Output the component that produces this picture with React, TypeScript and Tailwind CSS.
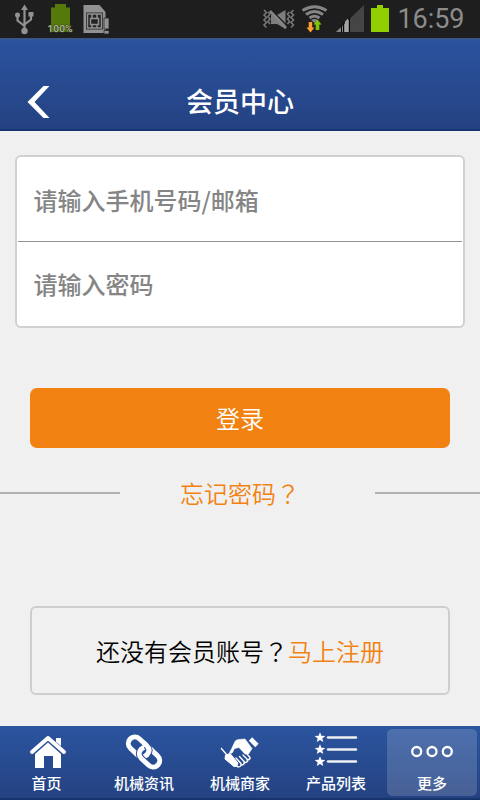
import type { ReactNode } from "react";

const star = "M0 -6 L1.6 -1.9 L6 -1.7 L2.6 1 L3.8 5.2 L0 2.8 L-3.8 5.2 L-2.6 1 L-6 -1.7 L-1.6 -1.9Z";

function LeftStatus() {
  return (
    <svg width="130" height="38" viewBox="0 0 130 38" className="block">
      <g stroke="#929292" strokeWidth="2.200" fill="none">
        <path d="M24.500 9v22M17.500 16v4.500l7 5.500M31 15v4.500l-6.500 5" />
      </g>
      <g fill="#929292">
        <path d="M24.500 4.500l3.500 5.500h-7z" />
        <circle cx="17.500" cy="15" r="2.500" />
        <rect x="28.500" y="12" width="5" height="4.500" />
        <circle cx="24.500" cy="31" r="3.200" />
      </g>
      <path d="M55 4h11v3.500h4V32H51V7.500h4z" fill="#55790b" />
      <text x="47.500" y="32" fontSize="9.500" fontWeight="500" fill="#b0b5a5" stroke="#34480c" strokeWidth="1" paintOrder="stroke" fontFamily="Roboto, sans-serif" textLength="25" lengthAdjust="spacingAndGlyphs">100%</text>
      <path d="M83.500 5h16l6 7v21h-22z" fill="#929292" />
      <rect x="86" y="12.500" width="17" height="17" fill="#242424" />
      <g fill="none" stroke="#929292" strokeWidth="1.500">
        <rect x="87.500" y="14" width="14" height="14" />
        <rect x="90.500" y="18.500" width="8" height="6" />
        <path d="M92 14v4M97 14v4M92 25v3M97 25v3" />
      </g>
      <path d="M104 18h5v11h-5zM104 30.500h5V34h-5z" fill="#929292" stroke="#1e1e1e" strokeWidth=".7" />
    </svg>
  );
}

function RightStatus() {
  return (
    <svg width="230" height="38" viewBox="250 0 230 38" className="block">
      <g fill="none" stroke="#777" strokeWidth="1.600">
        <path d="M264 10l2.500 2.500-2.500 2.500 2.500 2.500-2.500 2.500 2.500 2.500-2.500 2.500 2.500 2.500M268 12l2 2-2 2.500 2 2.500-2 2.500 2 2.500M293.500 10l-2.500 2.500 2.500 2.500-2.500 2.500 2.500 2.500-2.500 2.500 2.500 2.500-2.500 2.500M289.500 12l-2 2 2 2.500-2 2.500 2 2.500-2 2.500" />
      </g>
      <path d="M271 15h6l8.500-5v19l-8.500-5h-6z" fill="#7d7d7d" />
      <path d="M271 9.500l17 17.500" stroke="#1e1e1e" strokeWidth="1.500" />
      <path d="M270 11l16 17" stroke="#858585" strokeWidth="2.600" />
      <g fill="none" stroke="#858585" strokeWidth="3">
        <path d="M302.500 10.500q12-7.500 24 0M306 14.500q8.500-6 17 0M309.500 18q5-3.500 10 0" />
      </g>
      <path d="M311 20q3.500-2.200 7 0l-3.500 3z" fill="#858585" />
      <path d="M308.700 22h3.500v5.500h2.300l-4 5-4-5h2.200z" fill="#ff9d30" />
      <path d="M317.500 19.500l4 5h-2.200V30h-3.600v-5.500h-2.200z" fill="#81c407" />
      <path d="M336 32L364 5v27z" fill="#454545" />
      <path d="M336 32L349 19.500V32z" fill="#858585" />
      <path d="M341.500 25v7M343.500 23v9M349.500 18v14" stroke="#080808" strokeWidth="1" />
      <path d="M345 21.500V32h3V18.500z" fill="#a5a5a5" />
      <path d="M377 5h6v3h6v24h-18V8h6z" fill="#91cf00" />
      <text x="397.500" y="28" fontSize="27" fill="#8c8c8c" fontFamily="Roboto, sans-serif" textLength="67">16:59</text>
    </svg>
  );
}

function HomeIcon() {
  return (
    <svg width="44" height="38" viewBox="26 732 44 38" fill="#fff">
      <path d="M32 752L48 738L64 752" fill="none" stroke="#fff" strokeWidth="4" strokeLinecap="round" strokeLinejoin="round" />
      <path d="M56 738h5v8l-5-4zM35 754l13-11.500L61 754v14h-8v-12h-9v12h-9z" />
    </svg>
  );
}

function LinkIcon() {
  return (
    <svg width="44" height="38" viewBox="122 732 44 38" fill="none">
      <g transform="rotate(43 144 752)" stroke="#fff" strokeWidth="5">
        <rect x="125" y="745.500" width="23" height="13" rx="6.500" />
        <rect x="140" y="745.500" width="23" height="13" rx="6.500" stroke="#294f99" strokeWidth="7" />
        <rect x="140" y="745.500" width="23" height="13" rx="6.500" />
        <path d="M141 745.500q7 0 7 6.500" stroke="#294f99" strokeWidth="7" />
        <path d="M137 745.500h4.500q6.500 0 6.500 6.500v1" />
      </g>
    </svg>
  );
}

function HandshakeIcon() {
  return (
    <svg width="44" height="38" viewBox="218 732 44 38">
      <path d="M231.500 749l3.500-7.500q1-2 4-2l6-.5 7 9.500-3.500 5.500-3.500 0-6-6.500-4.500 1-2 4q-2 2-3 0z" fill="#fff" stroke="#fff" strokeWidth=".6" />
      <path d="M250.500 739l6.500 6.500" stroke="#fff" strokeWidth="4.600" />
      <path d="M221 748l5.500 6.500" stroke="#fff" strokeWidth="1.300" />
      <path d="M225.500 755l4.500-1.500 8 9.500-1.500 3.500-2.500 0-9-7.500z" fill="#fff" stroke="#fff" strokeWidth="1" strokeLinejoin="round" />
      <g fill="none" stroke="#fff" strokeWidth="1.400" strokeLinecap="round" strokeLinejoin="round">
        <path d="M236 758l5 5.500q.5 3.500-3 3.500l-1-1M239.500 756.500l5 5.500q0 3-3.500 3M243 755l5 5q-.5 3-4 2.500M247 754l3 3.500q0 2.500-3 2.500" />
      </g>
    </svg>
  );
}

function ListIcon() {
  return (
    <svg width="46" height="38" viewBox="313 732 46 38" fill="#fff">
      {[737.5, 749.5, 761.5].map((y) => (
        <g key={y}>
          <path d={star} transform={`translate(320 ${y}) scale(.88)`} />
          <path d={`M328 ${y}h28`} stroke="#eef0f4" strokeWidth="2.400" strokeLinecap="round" />
        </g>
      ))}
    </svg>
  );
}

function MoreIcon() {
  return (
    <svg width="46" height="38" viewBox="409 732 46 38" fill="none" stroke="#fff" strokeWidth="2.300">
      <circle cx="416.700" cy="751.500" r="4.500" />
      <circle cx="432" cy="751.500" r="4.500" />
      <circle cx="447.300" cy="751.500" r="4.500" />
    </svg>
  );
}

function Tab({ label, icon, active = false, labelClass = "" }: { label: string; icon: ReactNode; active?: boolean; labelClass?: string }) {
  return (
    <button className="flex h-full min-w-0 p-[3px] text-white">
      <span className={`flex h-[67px] w-full flex-col items-center rounded-[5px] pt-[3px] ${active ? "bg-white/16" : ""}`}>
        {icon}
        <span className={`mt-[3px] text-[15px] leading-[20px] font-medium whitespace-nowrap ${labelClass}`}>{label}</span>
      </span>
    </button>
  );
}

export default function App() {
  return (
    <div className="flex h-[800px] w-[480px] flex-col overflow-hidden bg-[#f0f0f0] font-['Noto_Sans_CJK_SC',sans-serif]">
      <div className="flex h-[38px] shrink-0 justify-between bg-[#1e1e1e]">
        <LeftStatus />
        <RightStatus />
      </div>
      <header className="grid h-[93px] shrink-0 grid-cols-[80px_1fr_80px] border-t-2 border-b-2 border-t-[#38558d] border-b-[#17346f] bg-linear-to-b from-[#2b539e] to-[#244282] pt-[34px] text-white">
        <button aria-label="返回" className="pl-[27px]">
          <svg width="24" height="34" viewBox="27 85 24 34">
            <path d="M43.500 86H49.500L34.500 102L49.500 118H43.500L27.500 102Z" fill="#fff" />
          </svg>
        </button>
        <h1 className="text-center text-[27px] leading-[54px] font-medium">会员中心</h1>
      </header>
      <main className="flex min-h-0 flex-1 flex-col">
        <form className="mx-[15px] mt-6 flex h-[173px] shrink-0 flex-col rounded-[6px] border-2 border-[#d0d0d0] bg-white px-px text-[24px] text-[#808080]">
          <input aria-label="账号" placeholder="请输入手机号码/邮箱" className="h-[85px] w-full border-b border-[#929292] px-[15.5px] font-medium outline-none placeholder:text-[#858585] placeholder:opacity-100" />
          <input aria-label="密码" type="password" placeholder="请输入密码" className="h-[84px] w-full px-[15.5px] pb-px font-medium outline-none placeholder:text-[#858585] placeholder:opacity-100" />
        </form>
        <button className="mx-[30px] mt-[60px] h-[60px] shrink-0 rounded-[7px] bg-[#f18211] text-[24px] font-[350] text-white">登录</button>
        <div className="mt-[26px] flex h-[38px] items-center">
          <span className="h-[2px] w-[120px] bg-[#b1b1b1]" />
          <a className="flex-1 pl-[60px] text-[24px] font-[350] text-[#f18211]">忘记密码<span className="font-['Noto_Sans_CJK_TC',sans-serif]">？</span></a>
          <span className="h-[2px] w-[105px] bg-[#b1b1b1]" />
        </div>
        <div className="mx-[30px] mt-[94px] flex h-[89px] items-center justify-center rounded-[6px] border-2 border-[#cecece] text-[24px] font-[350] whitespace-nowrap text-black">
          <span>还没有会员账号<span className="font-['Noto_Sans_CJK_TC',sans-serif]">？</span></span>
          <a className="text-[#f18211]">马上注册</a>
        </div>
      </main>
      <nav className="grid h-[74px] shrink-0 grid-cols-5 border-b-2 border-[#17346f] bg-linear-to-b from-[#2b559f] to-[#244282]">
        <Tab label="首页" icon={<HomeIcon />} labelClass="pr-[3px]" />
        <Tab label="机械资讯" icon={<LinkIcon />} />
        <Tab label="机械商家" icon={<HandshakeIcon />} />
        <Tab label="产品列表" icon={<ListIcon />} />
        <Tab label="更多" icon={<MoreIcon />} active />
      </nav>
    </div>
  );
}
